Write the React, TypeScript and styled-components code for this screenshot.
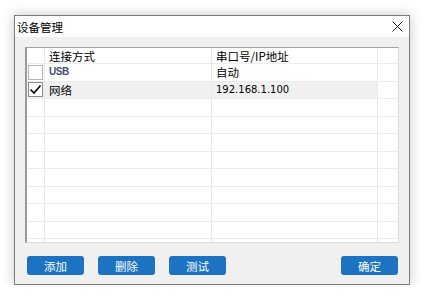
import styled, { createGlobalStyle } from "styled-components";

const GlobalStyle = createGlobalStyle`
  html, body {
    margin: 0;
    padding: 0;
    background: #ffffff;
  }
  body {
    font-family: "Noto Sans CJK SC", "Noto Sans", sans-serif;
    font-size: 12px;
    color: #000;
  }
`;

const Page = styled.div`
  padding: 15px 0 0 14px;
`;

const Window = styled.div`
  width: 394px;
  height: 268px;
  border: 1px solid #7a7a7a;
  background: #f0f0f0;
  box-shadow: 0 0 12px rgba(0, 0, 0, 0.22);
  display: flex;
  flex-direction: column;
`;

const TitleBar = styled.div`
  height: 21px;
  background: #ffffff;
  display: flex;
  align-items: center;
  justify-content: space-between;
  padding: 0 6px 0 2px;
`;

const Title = styled.span`
  font-size: 11.5px;
  line-height: 14px;
`;

const CloseButton = styled.span`
  display: flex;
  align-items: center;
  justify-content: center;
  width: 12px;
  height: 12px;
`;

const Body = styled.div`
  flex: 1;
  display: flex;
  flex-direction: column;
  padding: 10px 10px 9px 10px;
`;

const Table = styled.div`
  height: 196px;
  box-sizing: border-box;
  background: #ffffff;
  border-top: 1px solid #a0a0a0;
  border-left: 2px solid #9a9a9a;
  border-right: 1px solid #dcdcdc;
  border-bottom: 1px solid #dcdcdc;
  display: grid;
  grid-template-columns: 18px 167px 166px 1fr;
  grid-template-rows: 16px;
  grid-auto-rows: 17.5px;
  overflow: hidden;
`;

const Cell = styled.div<{ $selected?: boolean; $last?: boolean }>`
  box-sizing: border-box;
  border-right: ${(p) => (p.$last ? "none" : "1px solid #e8e8e8")};
  border-bottom: 1px solid #ececec;
  background: ${(p) => (p.$selected ? "#f0f0f0" : "#ffffff")};
  display: flex;
  align-items: center;
  padding-left: 4px;
  white-space: nowrap;
`;

const CheckCell = styled(Cell)`
  padding-left: 0;
  justify-content: center;
`;

const CheckBox = styled.div<{ $dark?: boolean }>`
  width: 15px;
  height: 15px;
  box-sizing: border-box;
  border: 1px solid ${(p) => (p.$dark ? "#8c8c8c" : "#b4b4b4")};
  background: #fff;
  display: flex;
  align-items: center;
  justify-content: center;
`;

const CellText = styled.span`
  font-size: 11.5px;
  line-height: 14px;
`;

const SmallLabel = styled.span`
  font-family: "Liberation Sans", "Noto Sans CJK SC", sans-serif;
  font-size: 10px;
  line-height: 12px;
  font-weight: bold;
  color: #3f4f78;
  letter-spacing: -0.4px;
`;

const IpText = styled.span`
  font-family: "DejaVu Sans", "Noto Sans CJK SC", sans-serif;
  font-size: 10px;
  line-height: 12px;
`;

const ButtonRow = styled.div`
  display: flex;
  gap: 14px;
  padding: 0 1px 0 2px;
  margin-top: 13px;
`;

const Button = styled.button<{ $push?: boolean }>`
  width: 57px;
  height: 19px;
  border: none;
  border-radius: 3px;
  background: #1c73c1;
  color: #ffffff;
  font-family: "Noto Sans CJK SC", sans-serif;
  font-size: 11.5px;
  line-height: 14px;
  padding: 0;
  margin-left: ${(p) => (p.$push ? "auto" : "0")};
`;

const emptyRows = Array.from({ length: 10 });

function Row() {
  return (
    <>
      <CheckCell />
      <Cell />
      <Cell />
      <Cell $last />
    </>
  );
}

export default function App() {
  return (
    <>
      <GlobalStyle />
      <Page>
        <Window>
          <TitleBar>
            <Title>设备管理</Title>
            <CloseButton>
              <svg width="11" height="11" viewBox="0 0 11 11">
                <path d="M0.5 0.5 L10.5 10.5 M10.5 0.5 L0.5 10.5" stroke="#222" strokeWidth="1" />
              </svg>
            </CloseButton>
          </TitleBar>
          <Body>
            <Table>
              <CheckCell />
              <Cell>
                <CellText>连接方式</CellText>
              </Cell>
              <Cell>
                <CellText>串口号/IP地址</CellText>
              </Cell>
              <Cell $last />

              <CheckCell>
                <CheckBox />
              </CheckCell>
              <Cell>
                <SmallLabel>USB</SmallLabel>
              </Cell>
              <Cell>
                <CellText>自动</CellText>
              </Cell>
              <Cell $last />

              <CheckCell $selected>
                <CheckBox $dark>
                  <svg width="13" height="13" viewBox="0 0 13 13">
                    <path d="M1.5 6.5 L5 10 L11.5 2.5" stroke="#000" strokeWidth="1.6" fill="none" />
                  </svg>
                </CheckBox>
              </CheckCell>
              <Cell $selected>
                <CellText>网络</CellText>
              </Cell>
              <Cell $selected>
                <IpText>192.168.1.100</IpText>
              </Cell>
              <Cell $last />

              {emptyRows.map((_, i) => (
                <Row key={i} />
              ))}
            </Table>
            <ButtonRow>
              <Button>添加</Button>
              <Button>删除</Button>
              <Button>测试</Button>
              <Button $push>确定</Button>
            </ButtonRow>
          </Body>
        </Window>
      </Page>
    </>
  );
}
